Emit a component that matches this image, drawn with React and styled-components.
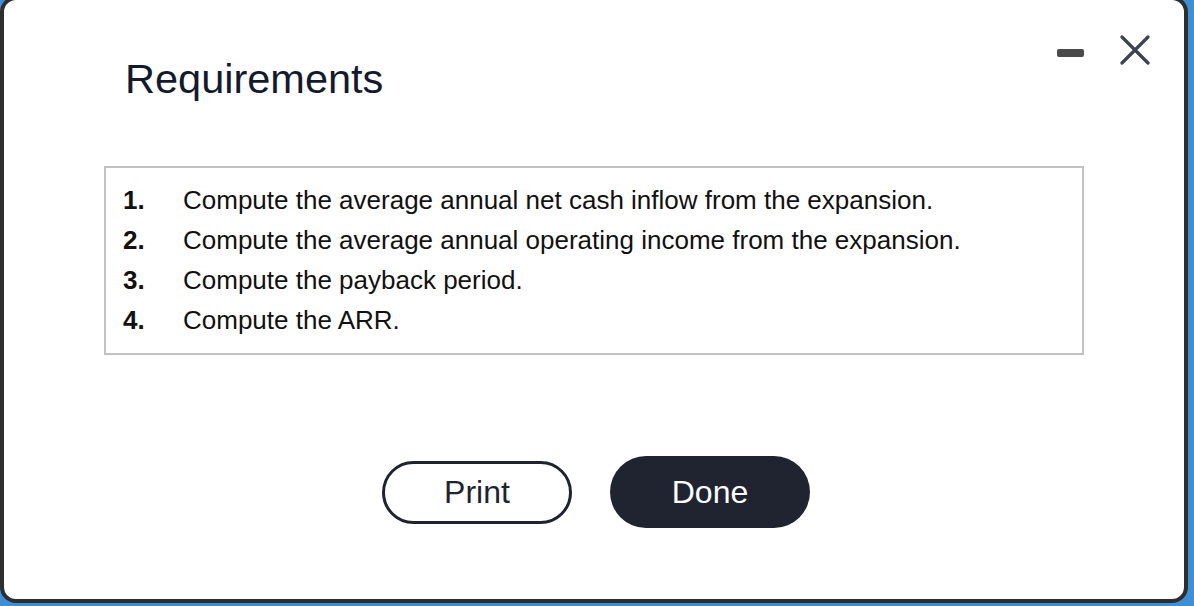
import React from 'react'
import styled, { createGlobalStyle } from 'styled-components'

const GlobalStyle = createGlobalStyle`
  html, body {
    margin: 0;
    padding: 0;
    background: #3f8fd4;
    overflow: hidden;
  }
  body {
    font-family: "Liberation Sans", Arial, sans-serif;
  }
`

const Window = styled.div`
  box-sizing: border-box;
  width: 1188px;
  height: 607px;
  margin-top: -4px;
  background: #fff;
  border: 4px solid #2e2e2e;
  border-radius: 16px;
  display: flex;
  flex-direction: column;
`

const Header = styled.div`
  display: flex;
  justify-content: space-between;
  align-items: flex-start;
  padding: 0 34px 0 121px;
`

const Title = styled.h1`
  margin: 55px 0 0;
  font-size: 41.5px;
  line-height: 48px;
  font-weight: 400;
  color: #141a2e;
`

const Controls = styled.div`
  display: flex;
  align-items: flex-start;
  gap: 36px;
  margin-top: 35px;
`

const Minimize = styled.button`
  width: 27px;
  height: 8px;
  margin-top: 14px;
  padding: 0;
  border: none;
  border-radius: 2px;
  background: #4a4a4a;
  cursor: pointer;
`

const Close = styled.button`
  display: flex;
  width: 30px;
  height: 30px;
  padding: 0;
  border: none;
  background: none;
  cursor: pointer;
`

const ListBox = styled.ol`
  list-style: none;
  margin: 63px 100px 0;
  padding: 12px 0 13px;
  border: 2px solid #c2c2c2;
`

const Item = styled.li`
  display: grid;
  grid-template-columns: 60px 1fr;
  padding-left: 17px;
  font-size: 26px;
  line-height: 40px;
  color: #111;
`

const Num = styled.span`
  font-weight: 700;
`

const Actions = styled.div`
  display: flex;
  justify-content: center;
  align-items: center;
  gap: 38px;
  margin-top: 101px;
  padding-left: 4px;
`

const Button = styled.button`
  box-sizing: border-box;
  width: ${({ $primary }) => ($primary ? '200px' : '190px')};
  height: ${({ $primary }) => ($primary ? '72px' : '63px')};
  border-radius: 40px;
  border: ${({ $primary }) => ($primary ? 'none' : '3px solid #1f2330')};
  background: ${({ $primary }) => ($primary ? '#1f2430' : '#fff')};
  color: ${({ $primary }) => ($primary ? '#fff' : '#1f2330')};
  font-family: "Liberation Sans", Arial, sans-serif;
  font-size: 32px;
  cursor: pointer;
`

const requirements = [
  'Compute the average annual net cash inflow from the expansion.',
  'Compute the average annual operating income from the expansion.',
  'Compute the payback period.',
  'Compute the ARR.',
]

export default function App() {
  return (
    <>
      <GlobalStyle />
      <Window>
        <Header>
          <Title>Requirements</Title>
          <Controls>
            <Minimize aria-label="Minimize" />
            <Close aria-label="Close">
              <svg width="30" height="30" viewBox="0 0 30 30">
                <path d="M2 2 L28 28 M28 2 L2 28" stroke="#3c4350" strokeWidth="3.2" strokeLinecap="round" />
              </svg>
            </Close>
          </Controls>
        </Header>
        <ListBox>
          {requirements.map((text, i) => (
            <Item key={i}>
              <Num>{i + 1}.</Num>
              <span>{text}</span>
            </Item>
          ))}
        </ListBox>
        <Actions>
          <Button>Print</Button>
          <Button $primary>Done</Button>
        </Actions>
      </Window>
    </>
  )
}
